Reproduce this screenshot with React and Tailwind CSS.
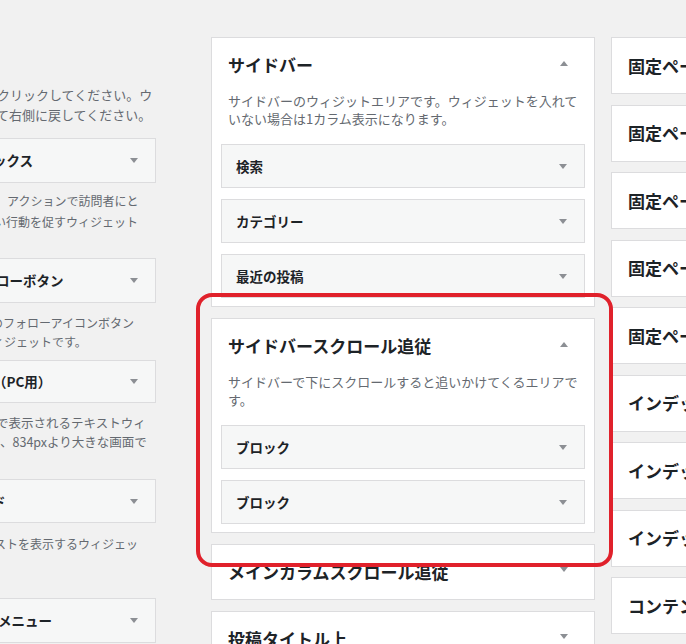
import React from "react";

const font = { fontFamily: '"Noto Sans CJK JP", "Noto Sans", sans-serif' };

function Arrow({ up }) {
  return (
    <svg width="8" height="5" viewBox="0 0 8 5" className="shrink-0">
      {up ? <path d="M0 5 L4 0 L8 5 Z" fill="#8c8f94" /> : <path d="M0 0 L8 0 L4 5 Z" fill="#8c8f94" />}
    </svg>
  );
}

function Widget({ title }) {
  return (
    <div className="h-[44px] border border-[#dcdcde] bg-[#f6f7f7] pl-[14px] pr-[17px] flex items-center justify-between">
      <span className="text-[13.5px] font-bold text-[#1d2327]">{title}</span>
      <Arrow />
    </div>
  );
}

function Area({ title, desc, widgets }) {
  if (!widgets) {
    return (
      <div className="h-[56px] shrink-0 border border-[#dcdcde] bg-white pl-[16px] pr-[26px] flex items-center justify-between">
        <span className="text-[17px] font-bold text-[#1d2327] whitespace-nowrap">{title}</span>
        <span className="-mt-[6px]">
          <Arrow />
        </span>
      </div>
    );
  }
  return (
    <div className="shrink-0 border border-[#dcdcde] bg-white pb-[8px]">
      <div className="h-[54px] pl-[16px] pr-[26px] flex items-center justify-between">
        <span className="text-[17px] font-bold text-[#1d2327] whitespace-nowrap">{title}</span>
        <span className="-mt-[4px]">
          <Arrow up />
        </span>
      </div>
      <div className="px-[16px] text-[13px] leading-[18px] text-[#646970] whitespace-nowrap">
        {desc.map((l, i) => (
          <div key={i}>{l}</div>
        ))}
      </div>
      <div className="mx-[9px] mt-[16px] flex flex-col gap-[11px]">
        {widgets.map((w, i) => (
          <Widget key={i} title={w} />
        ))}
      </div>
    </div>
  );
}

function LeftBox({ title, shift, className }) {
  return (
    <div className={"shrink-0 border border-l-0 border-[#dcdcde] bg-[#f6f7f7] pr-[17px] flex items-center justify-between overflow-hidden " + className}>
      <span className="text-[13.5px] font-bold text-[#1d2327] whitespace-nowrap" style={{ marginLeft: shift }}>
        {title}
      </span>
      <Arrow />
    </div>
  );
}

// lines: [text, marginLeft]
function LeftDesc({ lines, className }) {
  return (
    <div className={"text-[#646970] whitespace-nowrap " + className}>
      {lines.map((l, i) => (
        <div key={i} style={{ marginLeft: l[1] }}>
          {l[0] || "\u00a0"}
        </div>
      ))}
    </div>
  );
}

export default function App() {
  const right = [
    "固定ページ上",
    "固定ページタイトル上",
    "固定ページタイトル下",
    "固定ページ本文上",
    "固定ページ本文中",
    "インデックスリストトップ",
    "インデックスリスト中間",
    "インデックスリストボトム",
    "コンテンツ上部",
    "コンテンツ下部",
  ];
  return (
    <div className="relative w-[686px] h-[644px] overflow-hidden bg-[#f1f1f1] flex" style={font}>
      {/* available widgets (cut off on the left) */}
      <div className="w-[156px] shrink-0 flex flex-col overflow-hidden pt-[85px]">
        <LeftDesc
          className="text-[13px] leading-[20px]"
          lines={[
            ["クリックしてください。ウ", "-3px"],
            ["て右側に戻してください。", "-4px"],
          ]}
        />
        <LeftBox title="ックス" shift="-7px" className="mt-[13px] h-[45px]" />
        <LeftDesc
          className="mt-[7px] text-[12px] leading-[21px]"
          lines={[
            ["アクションで訪問者にと", "7px"],
            ["い行動を促すウィジェット", "-6px"],
          ]}
        />
        <LeftBox title="ローボタン" shift="-4px" className="mt-[26px] h-[45px]" />
        <LeftDesc
          className="mt-[10px] text-[12px] leading-[19px]"
          lines={[
            ["のフォローアイコンボタン", "-9px"],
            ["ィジェットです。", "-8px"],
          ]}
        />
        <LeftBox title="（PC用）" shift="-7px" className="mt-[9px] h-[43px]" />
        <LeftDesc
          className="mt-[10px] text-[12.5px] leading-[19px]"
          lines={[
            ["で表示されるテキストウィ", "-4px"],
            ["、834pxより大きな画面で", "0px"],
          ]}
        />
        <LeftBox title="ド" shift="-8px" className="mt-[28px] h-[44px]" />
        <LeftDesc
          className="mt-[11px] text-[12px] leading-[19px]"
          lines={[
            ["ストを表示するウィジェッ", "-6px"],
            ["", "0px"],
          ]}
        />
        <LeftBox title="メニュー" shift="-2px" className="mt-[26px] h-[45px]" />
      </div>

      {/* widget areas */}
      <div className="ml-[55px] w-[384px] shrink-0 pt-[37px] flex flex-col gap-[11px]">
        <Area
          title="サイドバー"
          desc={["サイドバーのウィジットエリアです。ウィジェットを入れて", "いない場合は1カラム表示になります。"]}
          widgets={["検索", "カテゴリー", "最近の投稿"]}
        />
        <Area
          title="サイドバースクロール追従"
          desc={["サイドバーで下にスクロールすると追いかけてくるエリアで", "す。"]}
          widgets={["ブロック", "ブロック"]}
        />
        <Area title="メインカラムスクロール追従" />
        <Area title="投稿タイトル上" />
      </div>

      <div className="ml-[16px] w-[300px] shrink-0 pt-[37px] flex flex-col gap-[10.5px]">
        {right.map((t, i) => (
          <div key={i} className="h-[57px] shrink-0 border border-[#dcdcde] bg-white pl-[16px] flex items-center">
            <span className="text-[17px] font-bold text-[#1d2327] whitespace-nowrap">{t}</span>
          </div>
        ))}
      </div>

      {/* red highlight annotation */}
      <div className="absolute left-[196px] top-[293px] w-[417px] h-[274px] border-[4px] border-[#e0212b] rounded-[16px] pointer-events-none" />
    </div>
  );
}
